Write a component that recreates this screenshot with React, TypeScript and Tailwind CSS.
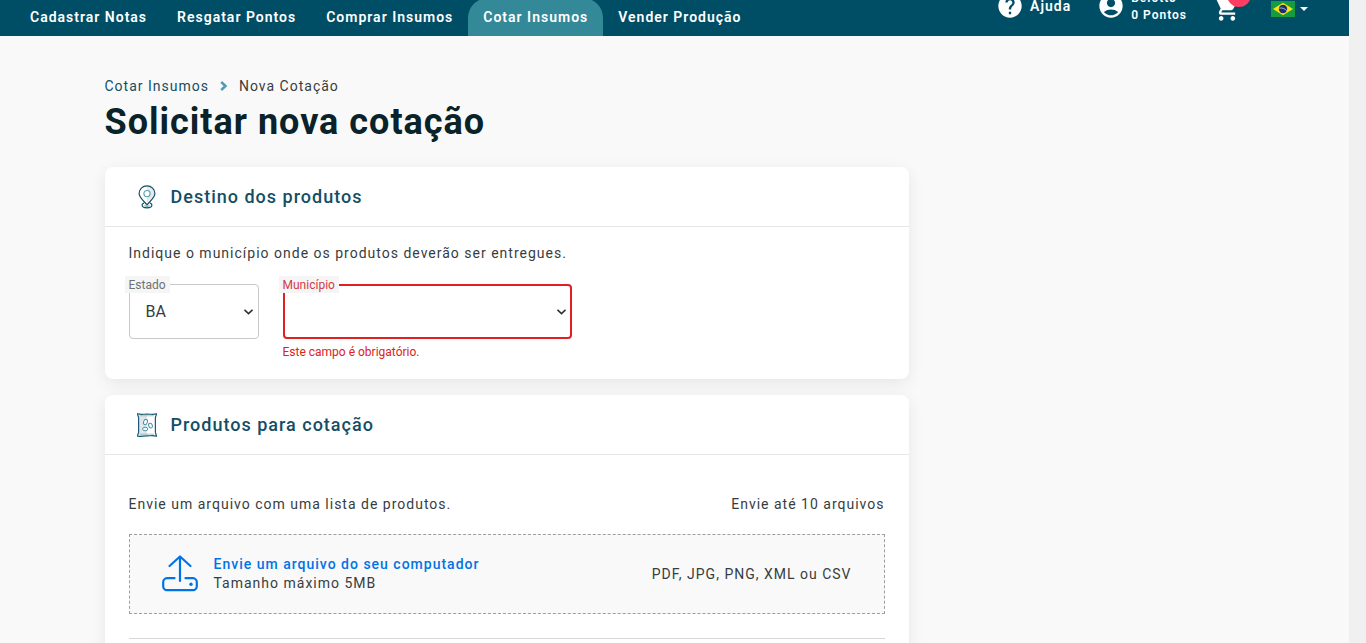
import type { ReactNode } from 'react';
import { MdAccountCircle, MdHelp, MdShoppingCart } from 'react-icons/md';

const navItems = ['Cadastrar Notas', 'Resgatar Pontos', 'Comprar Insumos', 'Cotar Insumos', 'Vender Produção'];
const activeItem = 'Cotar Insumos';

function BrazilFlag() {
  return (
    <svg width="24" height="16" viewBox="0 0 24 16" aria-hidden="true">
      <rect width="24" height="16" fill="#149c3e" />
      <path d="M12 1.800 22 8 12 14.200 2 8Z" fill="#fee016" />
      <circle cx="12" cy="8" r="4.200" fill="#1b2f6e" />
      <path d="M8.2 7.2c2.800-.6 5.600.3 7.500 2.400" fill="none" stroke="#c9d4e6" strokeWidth=".8" />
    </svg>
  );
}

function PinIcon() {
  return (
    <svg width="24" height="24" viewBox="0 0 24 24" fill="none" aria-hidden="true">
      <path d="M12 2v16c3-4 7.500-7 7.500-10.200C19.500 4 16 1 12 1Z" fill="#e6e8ea" />
      <path
        d="M12 .9c-4.500 0-7.900 3.300-7.900 7.700 0 4 4.300 7 7.900 11.200 3.600-4.200 7.900-7.200 7.900-11.200C19.900 4.200 16.500.9 12 .9Z"
        stroke="#134e64"
        strokeWidth="1.200"
      />
      <circle cx="12" cy="8.600" r="3.100" fill="#fff" stroke="#4f9db0" strokeWidth="1.100" />
      <path
        d="M9 18c-1.300.5-1.900 1.200-1.900 2 0 1.700 2.200 2.800 4.900 2.800s4.900-1.100 4.900-2.800c0-.8-.6-1.500-1.900-2"
        stroke="#134e64"
        strokeWidth="1.200"
      />
      <path d="M9.500 20.600c1.500 1 3.500 1 5 0" stroke="#4f9db0" />
    </svg>
  );
}

function SeedBagIcon() {
  return (
    <svg width="24" height="24" viewBox="0 0 24 24" fill="none" aria-hidden="true">
      <path d="M4 2h8v20H4Z" fill="#e2e6e9" />
      <path
        d="M2.600.8c3 1 5.500.3 9.400.3s6.400.7 9.400-.3c.2 1.400-1 2.400-1 4.200v14c0 1.800 1.200 2.800 1 4.200-3-1-5.500-.3-9.400-.3s-6.400.7-9.400.3c-.2-1.400 1-2.400 1-4.200V5c0-1.800-1.200-2.800-1-4.200Z"
        stroke="#1a5a72"
        strokeWidth="1.200"
      />
      <path d="M5 2.800h14M5 21.200h14" stroke="#7db0c0" strokeWidth=".7" />
      <ellipse cx="10.500" cy="9" rx="1.900" ry="2.700" transform="rotate(20 10.500 9)" fill="#fff" stroke="#4592ad" />
      <ellipse cx="15.500" cy="12.600" rx="1.800" ry="2.400" transform="rotate(-20 15.500 12.600)" fill="#fff" stroke="#4592ad" />
      <ellipse cx="10.200" cy="16" rx="2.600" ry="1.800" fill="#fff" stroke="#4592ad" />
    </svg>
  );
}

function UploadIcon() {
  return (
    <svg width="36" height="38" viewBox="0 0 36 38" fill="none" stroke="#0073e6" strokeWidth="2.200" strokeLinecap="round" strokeLinejoin="round" aria-hidden="true">
      <path d="M18 26V1.500M7.500 11 18 1.500 28.500 11" />
      <path d="M12.500 23.200H5a4 4 0 0 0-3.800 4v4a4 4 0 0 0 3.800 4h26a4 4 0 0 0 3.800-4v-4a4 4 0 0 0-3.800-4h-7.500" />
      <circle cx="29" cy="29.300" r="1.700" fill="#0073e6" stroke="none" />
    </svg>
  );
}

function SelectArrow() {
  return (
    <svg className="pointer-events-none absolute top-[25px] right-1.5" width="9" height="6" viewBox="0 0 9 6" fill="none" stroke="#2f3537" strokeWidth="1.600" aria-hidden="true">
      <path d="M.5.8 4.500 4.600 8.500.8" />
    </svg>
  );
}

function Header() {
  return (
    <header className="-mt-6 flex h-15 shrink-0 items-stretch justify-between bg-[#004e66] text-sm font-semibold text-white">
      <nav className="flex items-end pl-[15px]">
        {navItems.map((item) => (
          <a
            key={item}
            href="#"
            aria-current={item === activeItem ? 'page' : undefined}
            className={
              item === activeItem
                ? 'flex h-[38px] items-center rounded-t-[20px] bg-[#348998] px-[15px]'
                : 'flex h-[38px] items-center px-[15px]'
            }
          >
            {item}
          </a>
        ))}
      </nav>
      <div className="flex items-center pr-[41px]">
        <a href="#" className="flex items-center gap-1.5 leading-3">
          <MdHelp size={28} />
          Ajuda
        </a>
        <a href="#" className="ml-[26px] flex items-center gap-1.5">
          <MdAccountCircle size={28} />
          <span className="flex flex-col pt-0.5 text-xs leading-[17px]">
            <span>Belotto</span>
            <span>0 Pontos</span>
          </span>
        </a>
        <div className="flex items-center pt-1.5">
          <button type="button" aria-label="Carrinho" className="relative ml-[26px]">
            <MdShoppingCart size={28} />
            <span className="absolute -top-3 -right-2.5 size-6 rounded-full bg-[#ff3d60]" />
          </button>
          <button type="button" aria-label="Idioma" className="ml-[30px] flex items-center gap-[5px]">
            <BrazilFlag />
            <svg width="8" height="4" viewBox="0 0 8 4" aria-hidden="true">
              <path d="M0 0h8L4 4Z" fill="#fff" />
            </svg>
          </button>
        </div>
      </div>
    </header>
  );
}

function Card({ icon, title, children }: { icon: ReactNode; title: string; children: ReactNode }) {
  return (
    <section className="rounded-lg bg-white shadow-[0_4px_16px_rgba(0,0,0,0.08)]">
      <div className="flex h-15 items-center gap-3 border-b border-[#e6e8e8] pl-[30px]">
        {icon}
        <h2 className="text-lg font-medium text-[#134e64]">{title}</h2>
      </div>
      <div className="px-6">{children}</div>
    </section>
  );
}

export default function App() {
  return (
    <div className="flex h-screen overflow-hidden bg-[#f9f9f9] font-[Roboto,sans-serif] text-sm tracking-[1px] text-[#373d3f]">
      <div className="flex min-w-0 flex-1 flex-col">
        <Header />
        <main className="mx-auto w-full max-w-[1140px] pt-10">
          <nav aria-label="Trilha" className="flex items-center gap-[11px] leading-5">
            <a href="#" className="text-[#134e64]">Cotar Insumos</a>
            <svg width="8" height="10" viewBox="0 0 8 10" fill="none" stroke="#4f9db5" strokeWidth="2.500" aria-hidden="true">
              <path d="m1.200 1 4.300 4-4.300 4" />
            </svg>
            <span>Nova Cotação</span>
          </nav>
          <h1 className="mt-1 text-4xl font-bold leading-[44px] text-[#0a2229]">Solicitar nova cotação</h1>
          <div className="mt-[23px] flex max-w-[804px] flex-col gap-4">
            <Card icon={<PinIcon />} title="Destino dos produtos">
              <p className="pt-4 leading-5">Indique o município onde os produtos deverão ser entregues.</p>
              <div className="flex items-start gap-6 pt-[21px] pb-[18px] tracking-normal">
                <div className="relative w-[130px]">
                  <label htmlFor="estado" className="absolute -top-2 -left-1 bg-[#f5f5f5] px-1 pt-px text-xs leading-4 text-[#6c7375]">Estado</label>
                  <select id="estado" className="block h-[55px] w-full appearance-none rounded border border-[#c6c8ca] bg-white pl-4 text-base">
                    <option>BA</option>
                  </select>
                  <SelectArrow />
                </div>
                <div className="relative w-[289px]">
                  <label htmlFor="municipio" className="absolute -top-2 -left-1 bg-[#f5f5f5] px-1 pt-px text-xs leading-4 text-[#d33a45]">Município</label>
                  <select id="municipio" aria-describedby="municipio-erro" className="block h-[55px] w-full appearance-none rounded border-2 border-[#e02020] bg-white pl-4 text-base">
                    <option></option>
                  </select>
                  <SelectArrow />
                  <p id="municipio-erro" className="mt-1 text-xs leading-[18px] text-[#e02020]">Este campo é obrigatório.</p>
                </div>
              </div>
            </Card>
            <Card icon={<SeedBagIcon />} title="Produtos para cotação">
              <div className="flex justify-between pt-[39px] leading-5">
                <p>Envie um arquivo com uma lista de produtos.</p>
                <p>Envie até 10 arquivos</p>
              </div>
              <button type="button" className="mt-5 flex h-20 w-full items-center border border-dashed border-[#9a9fa1] bg-[#f9f9f9] px-8 text-left">
                <UploadIcon />
                <span className="ml-4 flex flex-1 flex-col leading-[19px]">
                  <span className="font-medium text-[#0073e6]">Envie um arquivo do seu computador</span>
                  <span>Tamanho máximo 5MB</span>
                </span>
                <span>PDF, JPG, PNG, XML ou CSV</span>
              </button>
              <hr className="mt-6 mb-10 border-[#d5d7d8]" />
            </Card>
          </div>
        </main>
      </div>
      <div className="w-[17px] shrink-0 bg-[#f0f0f0]" />
    </div>
  );
}
